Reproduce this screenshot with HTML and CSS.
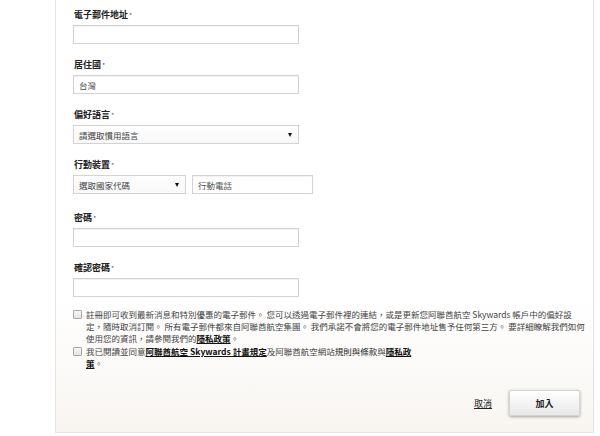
FILE: index.html
```html
<!DOCTYPE html>
<html lang="zh-Hant">
<head>
<meta charset="utf-8">
<title>加入 Skywards</title>
<link rel="stylesheet" href="styles.css">
</head>
<body>
<div class="card">
  <form class="form">
    <div class="field">
      <label class="lbl">電子郵件地址<span class="req">*</span></label>
      <input class="inp" type="text">
    </div>
    <div class="field">
      <label class="lbl">居住國<span class="req">*</span></label>
      <input class="inp" type="text" value="台灣">
    </div>
    <div class="field">
      <label class="lbl">偏好語言<span class="req">*</span></label>
      <div class="sel sel-wide"><span>請選取慣用語言</span><span class="arrow"></span></div>
    </div>
    <div class="field">
      <label class="lbl">行動裝置<span class="req">*</span></label>
      <div class="phone-row">
        <div class="sel sel-code"><span>選取國家代碼</span><span class="arrow"></span></div>
        <input class="inp inp-phone" type="text" placeholder="行動電話">
      </div>
    </div>
    <div class="field field-pw">
      <label class="lbl">密碼<span class="req">*</span></label>
      <input class="inp" type="password">
    </div>
    <div class="field">
      <label class="lbl">確認密碼<span class="req">*</span></label>
      <input class="inp" type="password">
    </div>

    <div class="agree">
      <div class="check">
        <span class="box"></span>
        <p class="txt">註冊即可收到最新消息和特別優惠的電子郵件。 您可以透過電子郵件裡的連結，或是更新您阿聯酋航空 Skywards 帳戶中的偏好設<br>定，隨時取消訂閱。 所有電子郵件都來自阿聯酋航空集團。 我們承諾不會將您的電子郵件地址售予任何第三方。 要詳細瞭解我們如何<br>使用您的資訊，請參閱我們的<a class="lnk" href="#">隱私政策</a>。</p>
      </div>
      <div class="check check-2">
        <span class="box"></span>
        <p class="txt">我已閱讀並同意<a class="lnk" href="#">阿聯酋航空 Skywards 計畫規定</a>及阿聯酋航空網站<span class="dark">規則與條款</span>與<a class="lnk" href="#">隱私政<br>策</a>。</p>
      </div>
    </div>

    <div class="actions">
      <a class="cancel" href="#">取消</a>
      <button class="join" type="button">加入</button>
    </div>
  </form>
</div>
</body>
</html>
```

FILE: styles.css
```css
* { box-sizing: border-box; }

body {
  margin: 0;
  background: #fff;
  font-family: "Noto Sans CJK TC", "Noto Sans", "Liberation Sans", sans-serif;
  color: #333;
}

.card {
  margin-left: 55px;
  width: 539px;
  border: 1px solid #e4e4e4;
  border-top: 0;
  background: linear-gradient(to bottom, #ffffff 0, #ffffff 300px, #f8f5f1 100%);
  padding: 9px 13px 16px 17px;
}

.field { margin-top: 15px; }
.field:first-child { margin-top: 0; }
.field-pw { margin-top: 18px; }

.lbl {
  display: block;
  font-size: 9px;
  line-height: 12px;
  font-weight: bold;
  color: #222;
  margin-bottom: 4px;
  padding-left: 1px;
}

.req {
  font-weight: normal;
  color: #666;
  font-size: 7px;
  vertical-align: top;
  margin-left: 1px;
}

.inp {
  display: block;
  width: 226px;
  height: 19px;
  margin: 0;
  padding: 0 5px;
  border: 1px solid #d3d3d3;
  box-shadow: inset 0 1px 1px rgba(0, 0, 0, 0.06);
  background: #fff;
  font-family: inherit;
  font-size: 8.5px;
  color: #555;
  outline: none;
}
.inp::placeholder { color: #555; }

.sel {
  display: flex;
  align-items: center;
  justify-content: space-between;
  height: 19px;
  padding: 0 5px 0 5px;
  border: 1px solid #d3d3d3;
  background: linear-gradient(to bottom, #ffffff, #f7f7f7);
  font-size: 8.5px;
  color: #444;
}
.sel-wide { width: 226px; }
.sel-code { width: 113px; }

.arrow {
  width: 0;
  height: 0;
  border-left: 2.5px solid transparent;
  border-right: 2.5px solid transparent;
  border-top: 4px solid #111;
  margin-right: 1px;
}

.phone-row {
  display: flex;
  gap: 6px;
}
.inp-phone { width: 121px; }

.agree { margin-top: 11px; }

.check {
  display: flex;
  align-items: flex-start;
  gap: 4px;
}
.check-2 { margin-top: 1px; }

.box {
  flex: none;
  width: 9px;
  height: 9px;
  margin-top: 2px;
  border: 1px solid #a8a8a8;
  border-radius: 1px;
  background: linear-gradient(to bottom, #f6f6f6, #e4e4e4);
}

.txt {
  margin: 0;
  font-size: 8.5px;
  line-height: 12px;
  color: #444;
  white-space: nowrap;
}

.lnk {
  color: #111;
  font-weight: bold;
  text-decoration: underline;
}
.dark { color: #222; }

.actions {
  display: flex;
  justify-content: flex-end;
  align-items: center;
  gap: 17px;
  margin-top: 21px;
}

.cancel {
  font-size: 9px;
  color: #222;
  text-decoration: underline;
}

.join {
  width: 71px;
  height: 26px;
  margin: 0;
  border: 1px solid #d4d4d4;
  border-radius: 2px;
  background: linear-gradient(to bottom, #ffffff, #e8e8e8);
  box-shadow: 0 1px 3px rgba(0, 0, 0, 0.35);
  font-family: inherit;
  font-size: 9px;
  font-weight: bold;
  color: #222;
}
```
